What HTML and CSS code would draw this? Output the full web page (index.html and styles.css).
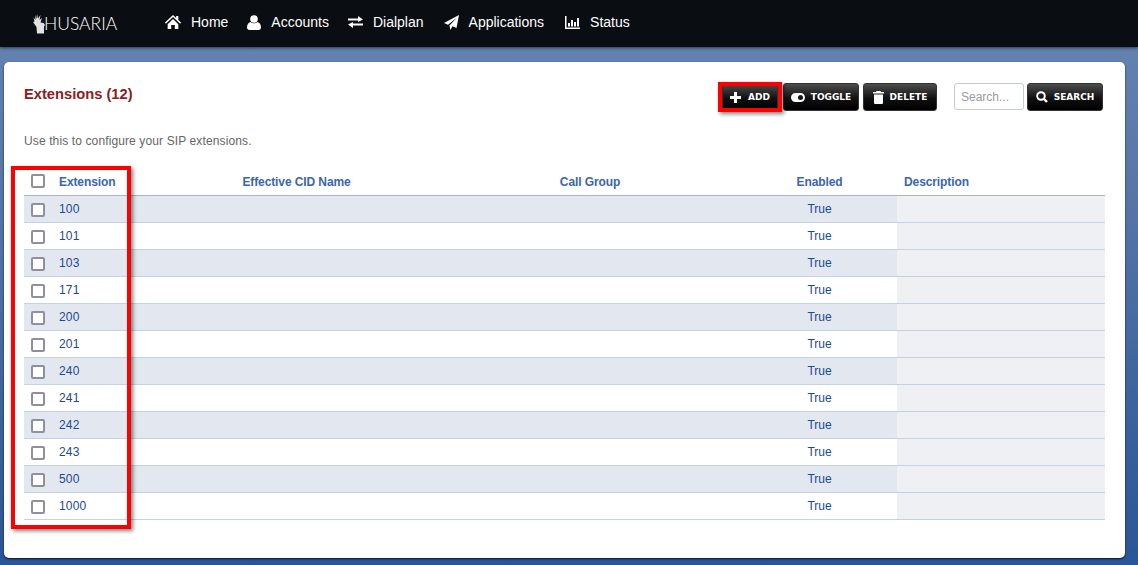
FILE: index.html
```html
<!DOCTYPE html>
<html lang="en">
<head>
<meta charset="utf-8">
<title>Extensions</title>
<link rel="stylesheet" href="styles.css">
</head>
<body>
<header class="topbar">
  <a class="logo" href="#">
    <svg class="logo-mark" width="12" height="20" viewBox="0 0 12 20"><path d="M2 1l1.500 4L4 0l1 4.500L7.500 1 6.500 6 9 4 7.500 8.500l3 .5L12 11l-1 1.500V19.500H4L3.500 13 0 8l1.500-.5L.5 3.500l2 2.500z" fill="#e2e2e2"/></svg>
    <span class="logo-text">HUSARIA</span>
  </a>
  <nav class="nav">
    <a class="nav-item" href="#"><svg class="nav-icon" width="16" height="14" viewBox="0 0 18 14" preserveAspectRatio="none"><path d="M9 0L0 7.500l1 1.200L9 2l8 6.700 1-1.200-3-2.500V1h-2.500v1.900z M3 9.300L9 4l6 5.300V14h-4v-4H7v4H3z" fill="#fff"/></svg>Home</a>
    <a class="nav-item" href="#"><svg class="nav-icon" width="14" height="15" viewBox="0 0 14 15"><circle cx="7" cy="4" r="3.800" fill="#fff"/><path d="M0 12.500C0 9.500 1.500 7.500 3.500 7c1 .8 2.200 1.300 3.500 1.300S9.500 7.800 10.500 7c2 .5 3.500 2.500 3.500 5.500 0 1.500-1 2.500-2.500 2.500h-9C1 15 0 14 0 12.500z" fill="#fff"/></svg>Accounts</a>
    <a class="nav-item" href="#"><svg class="nav-icon" width="15" height="12" viewBox="0 0 15 12"><path d="M0 2.500h10V0l5 3.500L10 6V4.500H0z M15 7.500H5V6L0 8.500 5 12V9.500h10z" fill="#fff"/></svg>Dialplan</a>
    <a class="nav-item nav-apps" href="#"><svg class="nav-icon" width="15" height="15" viewBox="0 0 15 15"><path d="M15 0L12.500 13 8.500 11.300 6.300 15 5.500 10.500 13 2.500 4 9.700 0 8z" fill="#fff"/></svg>Applications</a>
    <a class="nav-item nav-status" href="#"><svg class="nav-icon" width="15" height="13" viewBox="0 0 15 13"><path d="M0 0h1.500v11.500H15V13H0z M3 7h2v3.500H3z M6 4h2v6.500H6z M9 6h2v4.500H9z M12 2h2v8.500h-2z" fill="#fff"/></svg>Status</a>
  </nav>
</header>
<main class="stage">
  <section class="card">
    <div class="card-head">
      <h1 class="title">Extensions (12)</h1>
      <div class="actions">
        <button class="btn btn-add"><svg class="btn-icon" width="11" height="11" viewBox="0 0 11 11"><path d="M4 0h3v4h4v3H7v4H4V7H0V4h4z" fill="#fff"/></svg>ADD</button>
        <button class="btn"><svg class="btn-icon" width="14" height="9" viewBox="0 0 14 9"><path fill-rule="evenodd" d="M4.500 0h5a4.500 4.500 0 0 1 0 9h-5a4.500 4.500 0 0 1 0-9z M9.500 2a2.500 2.500 0 1 0 0 5 2.500 2.500 0 0 0 0-5z" fill="#fff"/></svg>TOGGLE</button>
        <button class="btn btn-delete"><svg class="btn-icon" width="11" height="13" viewBox="0 0 11 13"><path d="M3.500 0h4L8 1h3v1.500H0V1h3z M1 3.500h9V12a1 1 0 0 1-1 1H2a1 1 0 0 1-1-1z" fill="#fff"/></svg>DELETE</button>
        <input class="search" type="text" placeholder="Search...">
        <button class="btn"><svg class="btn-icon" width="12" height="12" viewBox="0 0 12 12"><circle cx="5" cy="5" r="3.800" fill="none" stroke="#fff" stroke-width="2"/><path d="M7.500 7.500L11 11" stroke="#fff" stroke-width="2.400"/></svg>SEARCH</button>
      </div>
    </div>
    <p class="intro">Use this to configure your SIP extensions.</p>
    <table class="grid">
      <colgroup>
        <col class="c-check"><col class="c-ext"><col class="c-name"><col class="c-group"><col class="c-enabled"><col class="c-desc">
      </colgroup>
      <thead>
        <tr>
          <th class="check"><input class="box" type="checkbox"></th>
          <th class="left">Extension</th>
          <th>Effective CID Name</th>
          <th>Call Group</th>
          <th>Enabled</th>
          <th class="desc-head">Description</th>
        </tr>
      </thead>
      <tbody>
        <tr><td class="check"><input class="box" type="checkbox"></td><td class="ext">100</td><td></td><td></td><td class="on">True</td><td class="desc"></td></tr>
        <tr><td class="check"><input class="box" type="checkbox"></td><td class="ext">101</td><td></td><td></td><td class="on">True</td><td class="desc"></td></tr>
        <tr><td class="check"><input class="box" type="checkbox"></td><td class="ext">103</td><td></td><td></td><td class="on">True</td><td class="desc"></td></tr>
        <tr><td class="check"><input class="box" type="checkbox"></td><td class="ext">171</td><td></td><td></td><td class="on">True</td><td class="desc"></td></tr>
        <tr><td class="check"><input class="box" type="checkbox"></td><td class="ext">200</td><td></td><td></td><td class="on">True</td><td class="desc"></td></tr>
        <tr><td class="check"><input class="box" type="checkbox"></td><td class="ext">201</td><td></td><td></td><td class="on">True</td><td class="desc"></td></tr>
        <tr><td class="check"><input class="box" type="checkbox"></td><td class="ext">240</td><td></td><td></td><td class="on">True</td><td class="desc"></td></tr>
        <tr><td class="check"><input class="box" type="checkbox"></td><td class="ext">241</td><td></td><td></td><td class="on">True</td><td class="desc"></td></tr>
        <tr><td class="check"><input class="box" type="checkbox"></td><td class="ext">242</td><td></td><td></td><td class="on">True</td><td class="desc"></td></tr>
        <tr><td class="check"><input class="box" type="checkbox"></td><td class="ext">243</td><td></td><td></td><td class="on">True</td><td class="desc"></td></tr>
        <tr><td class="check"><input class="box" type="checkbox"></td><td class="ext">500</td><td></td><td></td><td class="on">True</td><td class="desc"></td></tr>
        <tr><td class="check"><input class="box" type="checkbox"></td><td class="ext">1000</td><td></td><td></td><td class="on">True</td><td class="desc"></td></tr>
      </tbody>
    </table>
    <div class="mark mark-column"></div>
    <div class="mark mark-add"></div>
  </section>
</main>
</body>
</html>
```
FILE: styles.css
```css
* { box-sizing: border-box; }
html, body { height: 100%; }
body {
  margin: 0;
  height: 565px;
  overflow: hidden;
  font-family: "Liberation Sans", Arial, sans-serif;
  background: linear-gradient(180deg, #6482b0 47px, #5877a8 180px, #2a5596 565px);
}
.topbar {
  display: flex;
  align-items: center;
  height: 47px;
  background: #0a0d12;
  box-shadow: 0 1px 3px rgba(0, 0, 0, .55);
  padding: 0 0 3px 33px;
}
.logo {
  display: flex;
  align-items: center;
  width: 132px;
  padding-top: 3px;
  text-decoration: none;
}
.logo-mark { margin-right: -1px; }
.logo-text {
  font-family: "Lato", sans-serif;
  font-weight: 300;
  font-size: 17.500px;
  color: #fff;
}
.nav { display: flex; gap: 19px; }
.nav-item {
  display: flex;
  align-items: center;
  gap: 10px;
  color: #fff;
  font-size: 14px;
  text-decoration: none;
}
.nav-apps { margin-left: 1px; }
.nav-status { margin-left: 2px; }
.stage { padding: 15px 13px 0 4px; }
.card {
  position: relative;
  height: 496px;
  background: #fff;
  border-radius: 5px;
  box-shadow: 0 1px 2px rgba(0, 0, 0, .8);
  padding: 21px 20px 0 20px;
}
.card-head {
  display: flex;
  justify-content: space-between;
  align-items: flex-start;
  height: 42px;
}
.title {
  margin: 1px 0 0;
  font-size: 14.700px;
  line-height: 20px;
  font-weight: bold;
  color: #8b1c1c;
}
.actions {
  display: flex;
  gap: 4px;
  padding-right: 2px;
}
.btn {
  display: flex;
  align-items: center;
  justify-content: center;
  gap: 6px;
  height: 28px;
  width: 76px;
  padding: 0;
  border: 1px solid #333;
  border-radius: 3px;
  background: linear-gradient(180deg, #4d4d4d 0%, #111 55%, #000 100%);
  color: #fff;
  font-family: "DejaVu Sans", sans-serif;
  font-size: 9px;
  font-weight: bold;
}
.btn-add { width: 56px; gap: 7px; margin-right: 1px; }
.btn-delete { width: 74px; margin-right: 13px; }
.search {
  width: 70px;
  height: 27px;
  margin-right: -1px;
  padding: 0 6px;
  border: 1px solid #c5ccd6;
  border-radius: 3px;
  font-family: "Liberation Sans", Arial, sans-serif;
  font-size: 12px;
}
.search::placeholder { color: #9a9aa6; }
.intro {
  margin: 0;
  padding-top: 8px;
  height: 43px;
  font-size: 12px;
  letter-spacing: .12px;
  line-height: 16px;
  color: #666;
}
.grid {
  width: 1081px;
  table-layout: fixed;
  border-collapse: collapse;
  font-size: 12px;
}
.c-check { width: 29px; }
.c-ext { width: 102px; }
.c-name { width: 283px; }
.c-group { width: 304px; }
.c-enabled { width: 155px; }
.c-desc { width: 208px; }
th {
  height: 27px;
  padding: 1px 0 0;
  font-weight: bold;
  letter-spacing: -.1px;
  text-align: center;
  color: #3a66ae;
  border-bottom: 1px solid #a9b2c8;
}
th.left { text-align: left; padding-left: 6px; }
th.desc-head { text-align: left; padding-left: 7px; }
th.check { padding-top: 0; }
td {
  height: 27px;
  padding: 0;
  color: #1b4a92;
  border-bottom: 1px solid #c5d1e4;
}
tbody tr:nth-child(odd) td { background: #e3e7ef; }
td.ext { padding-left: 6px; letter-spacing: .15px; }
td.on { text-align: center; }
tbody tr td.desc, tbody tr:nth-child(odd) td.desc { background: #eff0f4; }
.check { text-align: left; padding-left: 7px; }
.box {
  appearance: none;
  display: block;
  width: 14px;
  height: 14px;
  margin: 0;
  border: 2px solid #8f8f9f;
  border-radius: 2px;
  background: #fff;
}
td .box { margin-top: 2px; }
.mark {
  position: absolute;
  border: 4px solid #f00;
  box-shadow: 2px 2px 4px rgba(0, 0, 0, .5);
}
.mark-column { left: 7px; top: 104px; width: 120px; height: 363px; }
.mark-add { left: 714px; top: 20px; width: 64px; height: 30px; }
```
